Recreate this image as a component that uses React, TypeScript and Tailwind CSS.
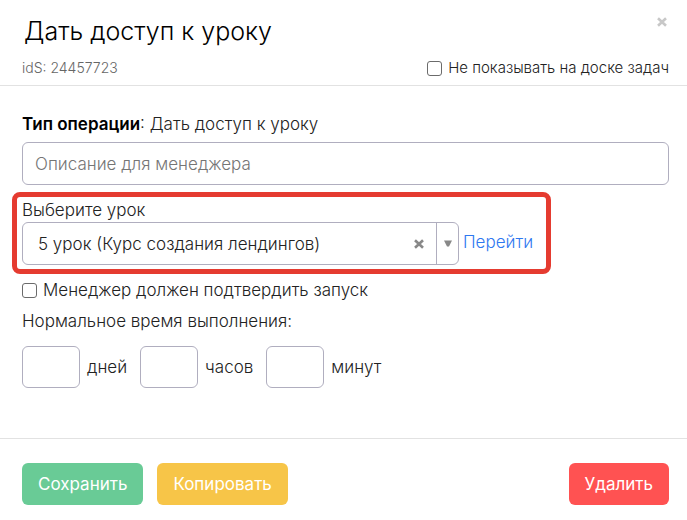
import { useState } from 'react';
import type { ReactNode } from 'react';

const LESSONS = ['5 урок (Курс создания лендингов)'];

const DURATION_FIELDS = [
  { id: 'days', label: 'дней' },
  { id: 'hours', label: 'часов' },
  { id: 'minutes', label: 'минут' },
];

const Cross = ({ className }: { className: string }) => (
  <svg viewBox="0 0 10 10" className={className} fill="none" stroke="currentColor" aria-hidden="true">
    <path d="M1 1.2 9 8.8M9 1.2 1 8.8" strokeWidth="2.6" />
  </svg>
);

const Checkbox = ({ className, children }: { className: string; children: ReactNode }) => (
  <label className={`flex items-center gap-[6px] ${className}`}>
    <input
      type="checkbox"
      className="size-[15px] shrink-0 appearance-none rounded-[3px] border border-[#6b6b6b] bg-white checked:bg-[#2f73e0]"
    />
    {children}
  </label>
);

const Header = () => (
  <header className="border-b border-[#e2e2e2] px-[18px] pb-[7px] pl-[22px]">
    <div className="flex items-start justify-between pt-[13px]">
      <h1 className="pl-[2px] text-[25px] leading-9 text-black">Дать доступ к уроку</h1>
      <button type="button" aria-label="Закрыть" className="mt-1 mr-[2px] text-[#c8c8c8]">
        <Cross className="size-[10px]" />
      </button>
    </div>
    <div className="flex items-center justify-between pt-[9px]">
      <span className="text-[14px] leading-5 text-[#666]">idS: 24457723</span>
      <Checkbox className="text-[15px] leading-5">Не показывать на доске задач</Checkbox>
    </div>
  </header>
);

const LessonSelect = () => {
  const [lesson, setLesson] = useState(LESSONS[0]);

  return (
    <div className="-mx-[10px] mt-[7px] w-[539px] max-w-full rounded-lg border-5 border-[#e53b30] px-[5px] pt-[2px] pb-1">
      <label htmlFor="lesson" className="block leading-[23px]">
        Выберите урок
      </label>
      <div className="flex items-center gap-1">
        <div className="relative w-[437px]">
          <select
            id="lesson"
            value={lesson}
            onChange={e => setLesson(e.target.value)}
            className="h-[43px] w-full appearance-none rounded-md border border-[#b0aebf] bg-white pr-14 pl-[15px]"
          >
            <option value=""></option>
            {LESSONS.map(item => (
              <option key={item}>{item}</option>
            ))}
          </select>
          <button
            type="button"
            aria-label="Очистить"
            onClick={() => setLesson('')}
            className="absolute top-[17px] right-[35px] text-[#888]"
          >
            <Cross className="size-[10px]" />
          </button>
          <span className="pointer-events-none absolute inset-y-px right-px flex w-[22px] items-center justify-center border-l border-[#b0aebf] text-[#888]">
            <svg viewBox="0 0 8 7" className="h-[7px] w-2" fill="currentColor" aria-hidden="true">
              <path d="M0 .5h8L5 6.5H3z" />
            </svg>
          </span>
        </div>
        <a href="#lesson" className="pb-1 text-[#2f78f0]">
          Перейти
        </a>
      </div>
    </div>
  );
};

const App = () => (
  <div className="min-h-screen bg-white font-['Inter','Noto_Sans',sans-serif] text-[17px] leading-6 font-light text-[#222]">
    <Header />
    <main className="px-[18px] pt-[26px] pb-[50px] pl-[22px]">
      <p>
        <b className="font-semibold text-black">Тип операции</b>: Дать доступ к уроку
      </p>
      <input
        type="text"
        aria-label="Описание для менеджера"
        placeholder="Описание для менеджера"
        className="mt-[6px] block h-[43px] w-full rounded-md border border-[#b0aebf] px-3 placeholder:text-[#757575]"
      />
      <LessonSelect />
      <Checkbox className="mt-1">Менеджер должен подтвердить запуск</Checkbox>
      <p className="mt-[7px]">Нормальное время выполнения:</p>
      <div className="mt-[13px] flex items-center gap-[13px]">
        {DURATION_FIELDS.map(({ id, label }) => (
          <div key={id} className="flex items-center gap-[7px]">
            <input id={id} type="text" className="h-[42px] w-[58px] rounded-md border border-[#b0aebf] px-3" />
            <label htmlFor={id}>{label}</label>
          </div>
        ))}
      </div>
    </main>
    <footer className="flex gap-[14px] border-t border-[#e2e2e2] px-[18px] py-6 pl-[22px] font-normal text-white">
      <button type="button" className="h-[42px] rounded-md bg-[#69cb96] px-4">
        Сохранить
      </button>
      <button type="button" className="h-[42px] rounded-md bg-[#f7c548] px-4">
        Копировать
      </button>
      <button type="button" className="ml-auto h-[42px] rounded-md bg-[#ff5252] px-4">
        Удалить
      </button>
    </footer>
  </div>
);

export default App;
